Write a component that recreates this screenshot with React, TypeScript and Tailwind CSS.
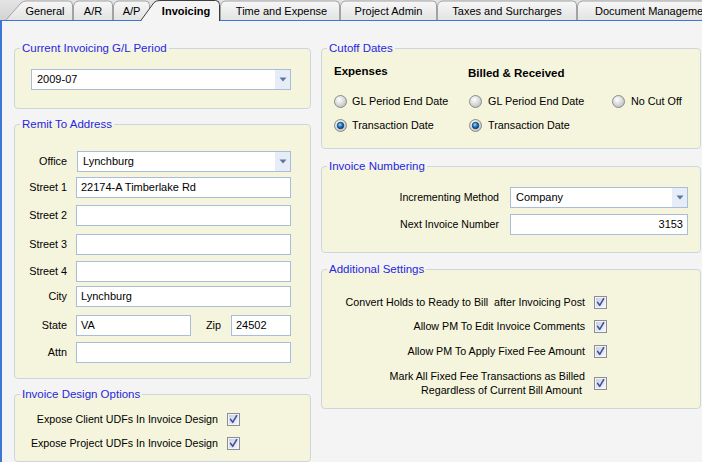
import React from "react";

const FONT = "font-['Liberation_Sans',Arial,sans-serif]";

function Radio({ on }: { on?: boolean }) {
  return (
    <svg width="13" height="13" viewBox="0 0 13 13" className="shrink-0">
      <defs>
        <radialGradient id="rOff" cx="40%" cy="35%" r="70%">
          <stop offset="0" stopColor="#ffffff" />
          <stop offset="1" stopColor="#bdbdbd" />
        </radialGradient>
        <radialGradient id="rOn" cx="40%" cy="35%" r="65%">
          <stop offset="0" stopColor="#9ad6ff" />
          <stop offset="0.5" stopColor="#2a86d0" />
          <stop offset="1" stopColor="#0c3f78" />
        </radialGradient>
      </defs>
      <circle cx="6.5" cy="6.5" r="6" fill="url(#rOff)" stroke="#8c8c8c" />
      {on && <circle cx="6.5" cy="6.5" r="3.2" fill="url(#rOn)" stroke="#123a66" strokeWidth="0.9" />}
    </svg>
  );
}

function Check() {
  return (
    <svg width="13" height="13" viewBox="0 0 13 13" className="shrink-0">
      <defs>
        <linearGradient id="cbg" x1="0" y1="0" x2="1" y2="1">
          <stop offset="0" stopColor="#cdcfd8" />
          <stop offset="1" stopColor="#f6f6f8" />
        </linearGradient>
      </defs>
      <rect x="0.5" y="0.5" width="12" height="12" fill="#f4f4f6" stroke="#8b8d9c" />
      <rect x="2" y="2" width="9" height="9" fill="url(#cbg)" />
      <path d="M3.6 6.4 L5.7 9.3 L9.7 2.6" fill="none" stroke="#3552a8" strokeWidth="1.6" strokeLinejoin="round" strokeLinecap="round" />
    </svg>
  );
}

function Select({ value, w }: { value: string; w: string }) {
  return (
    <div className={`flex h-[21px] border border-[#a9bcd8] bg-white ${w}`}>
      <div className="flex-1 pl-[5px] flex items-center text-[11px] text-black">{value}</div>
      <div className="w-[15px] bg-[#e6edf7] flex items-center justify-center">
        <svg width="8" height="5" viewBox="0 0 8 5">
          <path d="M0.5 0.5 L7.5 0.5 L4 4.5 Z" fill="#5a76a4" />
        </svg>
      </div>
    </div>
  );
}

function Input({ value, w, right }: { value?: string; w: string; right?: boolean }) {
  return (
    <div
      className={`h-[21px] border border-[#a9bcd8] bg-white flex items-center text-[11px] text-black ${
        right ? "justify-end pr-[4px]" : "pl-[4px]"
      } ${w}`}
    >
      {value}
    </div>
  );
}

function Group({ title, children, className = "" }: { title: string; children: React.ReactNode; className?: string }) {
  return (
    <fieldset className={`border border-[#cdd6df] rounded-[4px] bg-[#f5f5dd] p-0 m-0 min-w-0 ${className}`}>
      <legend className="ml-[5px] px-[2px] text-[11.5px] leading-[14px] text-[#2626e6]">{title}</legend>
      {children}
    </fieldset>
  );
}

function Tab({ label, w, kind, pl = 0, start }: { label: string; w: number; kind: "first" | "normal" | "sel"; pl?: number; start?: boolean }) {
  let d = "";
  const h = kind === "sel" ? 21 : 20;
  if (kind === "first") d = `M5,21 L21,3 Q23,1 26,1 L${w - 4.5},1 Q${w - 0.5},1 ${w - 0.5},5 L${w - 0.5},21`;
  else if (kind === "normal") d = `M0.5,21 L0.5,6 Q1.5,1 6,1 L${w - 4.5},1 Q${w - 0.5},1 ${w - 0.5},5 L${w - 0.5},21`;
  else d = `M0.5,21 L14,2.5 Q16,0.5 20,0.5 L${w - 4.5},0.5 Q${w - 0.5},0.5 ${w - 0.5},4.5 L${w - 0.5},21`;
  return (
    <div
      className={`relative shrink-0 h-[21px] ${kind === "sel" ? "z-10 -ml-[10px]" : ""}`}
      style={{ width: w }}
    >
      <svg width={w} height={h} viewBox={`0 0 ${w} ${h}`} className="absolute left-0 top-0">
        <defs>
          <linearGradient id="tabg" x1="0" y1="0" x2="0" y2="1">
            <stop offset="0" stopColor="#f7f7f7" />
            <stop offset="1" stopColor="#e2e2e2" />
          </linearGradient>
        </defs>
        <path d={d + " Z"} fill={kind === "sel" ? "#f4f4f4" : "url(#tabg)"} />
        <path d={d} fill="none" stroke={kind === "sel" ? "#3c3c3c" : "#a2a2a2"} />
      </svg>
      <div
        className={`relative h-[21px] flex items-center ${start ? "justify-start" : "justify-center"} text-[11px] text-black whitespace-nowrap ${
          kind === "sel" ? "font-bold" : ""
        }`}
        style={{ paddingLeft: pl, paddingTop: 1 }}
      >
        {label}
      </div>
    </div>
  );
}

function AddrRow({ label, mt, children }: { label: string; mt: string; children: React.ReactNode }) {
  return (
    <div className={`flex items-center ${mt}`}>
      <div className="w-[52px] text-right text-[10.8px] text-black">{label}</div>
      <div className="ml-[9px] flex items-center">{children}</div>
    </div>
  );
}

function CheckRow({ label, mt = "" }: { label: React.ReactNode; mt?: string }) {
  return (
    <div className={`flex justify-end items-center gap-[9px] min-h-[16px] ${mt}`}>
      <div className="text-right text-[10.7px] leading-[14px] text-black">{label}</div>
      <Check />
    </div>
  );
}

export default function App() {
  return (
    <div className={`w-[702px] h-[462px] overflow-hidden bg-[#f4f4f4] ${FONT}`}>
      {/* tab strip */}
      <div className="relative flex h-[21px] bg-gradient-to-b from-[#e4e4e4] to-[#d2d2d2] overflow-hidden">
        <Tab label="General" w={73} kind="first" pl={17} />
        <Tab label="A/R" w={40} kind="normal" />
        <Tab label="A/P" w={37} kind="normal" />
        <Tab label="Invoicing" w={80} kind="sel" pl={12} />
        <Tab label="Time and Expense" w={120} kind="normal" pl={3} />
        <Tab label="Project Admin" w={97} kind="normal" />
        <Tab label="Taxes and Surcharges" w={140} kind="normal" />
        <Tab label="Document Management" w={160} kind="normal" pl={18} start />
        <div className="absolute left-0 right-0 bottom-0 h-px bg-[#3b78d6] z-[5]" />
      </div>

      {/* body */}
      <div className="h-[441px] border-l-2 border-[#3b78d6] flex gap-[10px] pl-[12px] pt-[20px]">
        {/* left column */}
        <div className="w-[297px] flex flex-col gap-[8px] shrink-0">
          <Group title="Current Invoicing G/L Period">
            <div className="pl-[16px] pt-[14px] pb-[18px]">
              <Select value="2009-07" w="w-[260px]" />
            </div>
          </Group>

          <Group title="Remit To Address">
            <div className="pt-[20px] pb-[15px]">
              <AddrRow label="Office" mt="">
                <div className="ml-[1px]">
                  <Select value="Lynchburg" w="w-[214px]" />
                </div>
              </AddrRow>
              <AddrRow label="Street 1" mt="mt-[5px]">
                <Input value="22174-A Timberlake Rd" w="w-[215px]" />
              </AddrRow>
              <AddrRow label="Street 2" mt="mt-[7px]">
                <Input w="w-[215px]" />
              </AddrRow>
              <AddrRow label="Street 3" mt="mt-[8px]">
                <Input w="w-[215px]" />
              </AddrRow>
              <AddrRow label="Street 4" mt="mt-[6px]">
                <Input w="w-[215px]" />
              </AddrRow>
              <AddrRow label="City" mt="mt-[4px]">
                <Input value="Lynchburg" w="w-[215px]" />
              </AddrRow>
              <AddrRow label="State" mt="mt-[8px]">
                <Input value="VA" w="w-[115px]" />
                <div className="ml-[15px] w-[15px] text-[10.8px] text-black">Zip</div>
                <div className="ml-[10px]">
                  <Input value="24502" w="w-[60px]" />
                </div>
              </AddrRow>
              <AddrRow label="Attn" mt="mt-[6px]">
                <Input w="w-[215px]" />
              </AddrRow>
            </div>
          </Group>

          <Group title="Invoice Design Options">
            <div className="pr-[70px] pt-[10px] pb-[10px]">
              <CheckRow label="Expose Client UDFs In Invoice Design" />
              <CheckRow label="Expose Project UDFs In Invoice Design" mt="mt-[8px]" />
            </div>
          </Group>
        </div>

        {/* right column */}
        <div className="w-[380px] flex flex-col shrink-0">
          <Group title="Cutoff Dates">
            <div className="pl-[12px] pt-[8px] pb-[15px] text-[10.8px] text-black">
              <div className="flex h-[16px] items-center">
                <div className="w-[134px] font-bold text-[11.5px] pt-[1px]">Expenses</div>
                <div className="w-[144px] font-bold text-[11.5px] pt-[5px]">Billed &amp; Received</div>
              </div>
              <div className="flex h-[16px] items-center mt-[14px]">
                <div className="w-[134px] flex items-center gap-[5px]">
                  <Radio />
                  <span>GL Period End Date</span>
                </div>
                <div className="w-[144px] flex items-center gap-[6px] pl-[1px]">
                  <Radio />
                  <span>GL Period End Date</span>
                </div>
                <div className="flex items-center gap-[6px]">
                  <Radio />
                  <span>No Cut Off</span>
                </div>
              </div>
              <div className="flex h-[16px] items-center mt-[8px]">
                <div className="w-[134px] flex items-center gap-[5px]">
                  <Radio on />
                  <span>Transaction Date</span>
                </div>
                <div className="w-[144px] flex items-center gap-[6px] pl-[1px]">
                  <Radio on />
                  <span>Transaction Date</span>
                </div>
              </div>
            </div>
          </Group>

          <Group title="Invoice Numbering" className="mt-[10px]">
            <div className="pt-[14px] pb-[17px] text-[10.6px] text-black">
              <div className="flex items-center">
                <div className="w-[177px] text-right">Incrementing Method</div>
                <div className="ml-[11px]">
                  <Select value="Company" w="w-[178px]" />
                </div>
              </div>
              <div className="flex items-center mt-[6px]">
                <div className="w-[177px] text-right">Next Invoice Number</div>
                <div className="ml-[11px]">
                  <Input value="3153" w="w-[178px]" right />
                </div>
              </div>
            </div>
          </Group>

          <Group title="Additional Settings" className="mt-[9px]">
            <div className="pr-[93px] pt-[18px] pb-[11px]">
              <CheckRow label={<>Convert Holds to Ready to Bill&nbsp; after Invoicing Post</>} />
              <CheckRow label="Allow PM To Edit Invoice Comments" mt="mt-[8px]" />
              <CheckRow label="Allow PM To Apply Fixed Fee Amount" mt="mt-[9px]" />
              <CheckRow
                label={
                  <>
                    Mark All Fixed Fee Transactions as Billed
                    <br />
                    Regardless of Current Bill Amount&nbsp;
                  </>
                }
                mt="mt-[10px]"
              />
            </div>
          </Group>
        </div>
      </div>
    </div>
  );
}
